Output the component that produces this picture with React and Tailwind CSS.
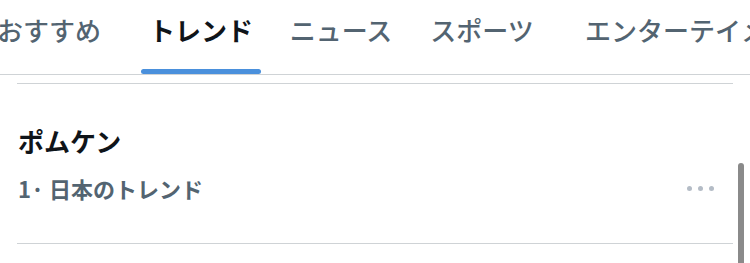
export default function App() {
  return (
    <div
      className="relative w-[750px] h-[263px] overflow-hidden bg-white"
      style={{ fontFamily: '"Noto Sans CJK JP", "Noto Sans", sans-serif' }}
    >
      {/* tabs */}
      <div className="flex h-[74px] whitespace-nowrap text-[26px] leading-[26px] font-medium text-[#536471]">
        <div className="-ml-[3px] w-[104px] shrink-0 pt-[17px] text-center">おすすめ</div>
        <div className="ml-[40px] flex w-[120px] shrink-0 flex-col items-center">
          <span className="pt-[17px] font-bold text-[#0f1419]">トレンド</span>
          <span className="mt-auto h-[5px] w-full rounded-full bg-[#4a90dc]"></span>
        </div>
        <div className="ml-[28px] w-[104px] shrink-0 pt-[17px] text-center">ニュース</div>
        <div className="ml-[37px] w-[104px] shrink-0 pt-[17px] text-center">スポーツ</div>
        <div className="ml-[51px] shrink-0 pt-[17px]">エンターテイメント</div>
      </div>
      <div className="h-px bg-[#cfd3d6]"></div>
      <div className="mx-[17px] mt-[8px] h-px bg-[#cfd3d6]"></div>

      {/* trend item */}
      <div className="pl-[18px] pr-[36px]">
        <div className="mt-[44px] text-[26px] leading-[26px] font-bold text-[#0f1419]">ポムケン</div>
        <div className="mt-[23px] flex items-center justify-between">
          <span className="text-[22px] leading-[22px] font-semibold text-[#536471]">1· 日本のトレンド</span>
          <div className="flex gap-[6px]">
            <span className="h-[5px] w-[5px] rounded-full bg-[#b4bcc6]"></span>
            <span className="h-[5px] w-[5px] rounded-full bg-[#b4bcc6]"></span>
            <span className="h-[5px] w-[5px] rounded-full bg-[#b4bcc6]"></span>
          </div>
        </div>
      </div>
      <div className="mx-[17px] mt-[44px] h-px bg-[#cfd3d6]"></div>

      {/* scrollbar */}
      <div className="absolute left-[738px] top-[163px] h-[110px] w-[6px] rounded-full bg-[#8a8a8a]"></div>
    </div>
  );
}
